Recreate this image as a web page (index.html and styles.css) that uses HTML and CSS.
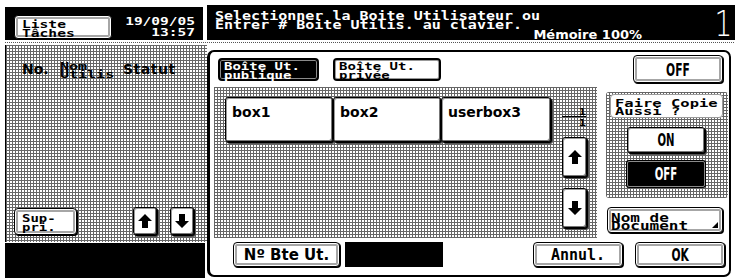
FILE: index.html
```html
<!DOCTYPE html>
<html lang="fr">
<head>
<meta charset="utf-8">
<title>Boîte Utilisateur</title>
<link rel="stylesheet" href="styles.css">
</head>
<body>
<div class="screen">
  <aside class="left">
    <div class="lhead">
      <button class="b-frame liste"><span class="mono sq t-liste">Liste<br>Tâches</span></button>
      <div class="mono sq clock">19/09/05<br>13:57</div>
    </div>
    <div class="dotline"></div>
    <div class="lpanel pattern">
      <div class="cols">
        <span class="c-no">No.</span>
        <span class="c-nom"><span class="mono sq t-nom">Nom<br>Utilis</span></span>
        <span class="c-stat">Statut</span>
      </div>
      <div class="lactions">
        <button class="b-frame suppr"><span class="mono sq t-sup">Sup-<br>pri.</span></button>
        <div class="arrows">
          <button class="b-raise arrow-sm" aria-label="haut"><svg width="14" height="14" viewBox="0 0 14 14"><path d="M7 0L14 7H10V14H4V7H0Z"/></svg></button>
          <button class="b-raise arrow-sm" aria-label="bas"><svg width="14" height="14" viewBox="0 0 14 14"><path d="M7 14L14 7H10V0H4V7H0Z"/></svg></button>
        </div>
      </div>
    </div>
    <div class="lfoot"></div>
  </aside>

  <main class="right">
    <header class="rhead">
      <div class="msg">
        <p class="mono sq t-msg">Selectionner la Boite Utilisateur ou<br>Entrer # Boite Utilis. au clavier.</p>
        <p class="mem">Mémoire 100%</p>
      </div>
      <div class="num">1</div>
    </header>
    <div class="dotline"></div>

    <section class="panel">
      <div class="tabs">
        <button class="tab sel"><span class="mono sq t-tab">Boîte Ut.<br>publique</span></button>
        <button class="tab"><span class="mono sq t-tab">Boîte Ut.<br>privée</span></button>
      </div>
      <div class="topside">
        <button class="b-frame cond off-top"><span class="nx">OFF</span></button>
      </div>

      <div class="list pattern">
        <div class="boxes">
          <button class="b-raise box">box1</button>
          <button class="b-raise box">box2</button>
          <button class="b-raise box box3">userbox3</button>
        </div>
        <div class="pager">
          <div class="pg">
            <span class="mono sq t-pg">1</span>
            <span class="pg-line"></span>
            <span class="mono sq t-pg">1</span>
          </div>
          <button class="b-raise arrow-tall up" aria-label="haut"><svg width="14" height="14" viewBox="0 0 14 14"><path d="M7 0L14 7H10V14H4V7H0Z"/></svg></button>
          <button class="b-raise arrow-tall down" aria-label="bas"><svg width="14" height="14" viewBox="0 0 14 14"><path d="M7 14L14 7H10V0H4V7H0Z"/></svg></button>
        </div>
      </div>

      <div class="side">
        <div class="copy pattern">
          <div class="copy-label"><span class="mono sq t-copy">Faire Copie<br>Aussi ?</span></div>
          <button class="b-raise cond onoff"><span class="nx">ON</span></button>
          <button class="cond onoff dark"><span class="nx">OFF</span></button>
        </div>
        <button class="b-frame docname"><span class="mono sq t-doc">Nom de<br>Document</span></button>
      </div>

      <div class="brow">
        <button class="b-frame bnum">Nº Bte Ut.</button>
        <div class="field"></div>
        <button class="b-frame mono annul">Annul.</button>
        <button class="b-frame cond ok"><span class="nx">OK</span></button>
      </div>
    </section>
  </main>
</div>
</body>
</html>
```

FILE: styles.css
```css
* { box-sizing: border-box; margin: 0; padding: 0; }
html, body { width: 735px; height: 278px; overflow: hidden; background: #fff; }
body { font-family: "DejaVu Sans", sans-serif; color: #000; }
button {
  font: inherit; color: inherit; background: none; border: 0;
  display: flex; align-items: center; justify-content: center;
  text-align: left;
}

.screen { display: flex; height: 278px; }

.pattern {
  background:
    linear-gradient(90deg, #666 1px, transparent 1px) 0 0 / 3px 3px,
    linear-gradient(#666 1px, #fff 1px) 0 0 / 3px 3px;
}
.mono { font-family: "DejaVu Sans Mono", monospace; font-weight: bold; }
.sq { display: inline-block; transform: translateY(1.5px) scaleY(.72); }
.cond { font-family: "DejaVu Sans Condensed", "DejaVu Sans", sans-serif; font-weight: bold; font-size: 18px; }
.nx { display: inline-block; transform: scaleX(.66); }

/* button looks */
.b-frame {
  background: #fff;
  border: 1px solid #000;
  border-radius: 4px;
  box-shadow: inset 0 0 0 1px #fff, inset 0 0 0 3px #a6a6a6, 1px 1px 0 #000;
}
.b-raise {
  background: #fff;
  border: 1px solid #000;
  border-radius: 3px;
  box-shadow: inset 1px 1px 0 #9a9a9a, inset -1px -1px 0 #777, 1px 1px 0 #000, 2px 2px 0 #555;
}

.dotline { height: 1px; margin-top: 2px; background: repeating-linear-gradient(90deg, #555 0 1px, transparent 1px 2px); }

/* ---------- left column ---------- */
.left { width: 202px; margin-left: 5px; display: flex; flex-direction: column; }
.lhead {
  height: 33px; margin-top: 7px; margin-right: 4px;
  background: #000;
  display: flex; align-items: center; justify-content: space-between;
  padding: 0 8px 0 9px;
}
.liste { width: 98px; height: 24px; align-self: flex-end; margin-bottom: 1px; justify-content: flex-start; padding-left: 7px; }
.t-liste { font-size: 14.6px; line-height: 12.4px; }
.clock { color: #fff; text-align: right; font-size: 14.5px; line-height: 12.8px; transform: scaleY(.78); margin-top: 7px; }

.lpanel {
  margin-top: 2px; flex: 1;
  border-left: 1px solid #000;
  display: flex; flex-direction: column; justify-content: space-between;
  padding: 13px 13px 7px 8px;
}
.cols { display: grid; grid-template-columns: 38px 63px auto; align-items: center; margin-left: 8px; }
.c-no { font-weight: bold; font-size: 14px; }
.c-nom { display: flex; align-items: center; }
.t-nom { font-size: 15px; line-height: 11px; }
.c-stat { font-weight: bold; font-size: 14px; letter-spacing: .5px; }

.lactions { display: flex; align-items: flex-end; justify-content: space-between; }
.suppr { width: 63px; height: 27px; justify-content: flex-start; padding-left: 7px; }
.t-sup { font-size: 14px; line-height: 11.5px; }
.arrows { display: flex; gap: 13px; }
.arrow-sm { width: 24px; height: 28px; }

.lfoot { height: 35px; margin-top: 1px; margin-right: 2px; background: #000; }

/* ---------- right column ---------- */
.right { flex: 1; display: flex; flex-direction: column; }
.rhead {
  margin-top: 5px; height: 35px;
  background: #000; color: #fff;
  display: flex; padding: 7px 3px 0 8px;
}
.msg { width: 427px; display: flex; flex-direction: column; }
.t-msg { font-size: 15px; line-height: 12.2px; transform: scaleY(.76); transform-origin: 0 0; margin-bottom: -8px; }
.mem { align-self: flex-end; font-weight: bold; font-size: 13px; line-height: 13px; }
.num {
  margin-left: auto; margin-top: -2px;
  font-family: "DejaVu Sans", sans-serif;
  font-weight: 200;
  font-size: 35px; line-height: 28px;
  transform: scaleX(.8); transform-origin: 100% 50%;
}

.panel {
  flex: 1;
  margin: 7px 4px 1px 0;
  border: 2px solid #000; border-left-width: 3px;
  border-radius: 7px;
  background: #fff;
  display: grid;
  grid-template-columns: 383px 122px;
  grid-template-rows: 29px 151px 26px;
  column-gap: 9px; row-gap: 3px;
  padding: 3px 1px 7px 4px;
}

.tabs { display: flex; align-items: center; gap: 14px; padding-left: 4px; }
.tab {
  height: 23px; justify-content: flex-start; padding-left: 4px;
  background: #fff;
  border: 2px solid #000; border-radius: 4px;
  box-shadow: inset 0 0 0 1px #999;
}
.tab:first-child { width: 101px; }
.tab:last-child { width: 108px; }
.tab.sel { background: #000; color: #fff; box-shadow: inset 0 0 0 1px #8a8a8a; }
.t-tab { font-size: 14px; line-height: 12.5px; }

.topside { display: flex; }
.off-top { width: 90px; height: 28px; margin-left: 27px; }

.list { display: flex; padding: 10px 0 0 11px; }
.boxes { display: flex; align-items: flex-start; }
.box {
  width: 108px; height: 45px;
  align-items: flex-start; justify-content: flex-start;
  padding: 6px 6px;
  font-weight: bold; font-size: 14px; line-height: 16px;
}
.box3 { width: 110px; }

.pager { margin-left: 9px; width: 28px; display: flex; flex-direction: column; }
.pg { margin-top: 8px; margin-left: 2px; height: 22px; display: flex; flex-direction: column; align-items: flex-end; justify-content: center; padding-right: 2px; }
.t-pg { font-size: 12px; line-height: 10px; }
.pg-line { align-self: stretch; height: 1px; background: #000; }
.arrow-tall { width: 25px; height: 40px; margin-left: 2px; }
.arrow-tall.up { margin-top: 10px; }
.arrow-tall.down { margin-top: 11px; }

.side { display: flex; flex-direction: column; justify-content: space-between; padding: 5px 0; }
.copy {
  height: 106px; border-radius: 3px;
  padding: 2px 5px 0 4px;
  display: flex; flex-direction: column;
}
.copy-label {
  height: 24px; background: #fff;
  border: 1px solid #9a9a9a; border-radius: 4px;
  display: flex; align-items: center; padding-left: 4px;
}
.t-copy { font-size: 15.5px; line-height: 12px; }
.onoff { width: 78px; height: 26px; margin-left: 17px; margin-top: 9px; font-size: 17px; }
.onoff.dark { margin-top: 8px; background: #000; color: #fff; border: 1px solid #8a8a8a; box-shadow: 0 0 0 1px #000; border-radius: 2px; }

.docname {
  position: relative;
  width: 116px; height: 26px; margin-left: 1px;
  justify-content: flex-start; padding-left: 3px;
}
.docname::after {
  content: ""; position: absolute; right: 4px; bottom: 4px;
  border-left: 6px solid transparent; border-bottom: 6px solid #000;
}
.t-doc { font-size: 16px; line-height: 11.5px; }

.brow { grid-column: 1 / -1; display: flex; padding-left: 19px; margin-top: 1px; }
.bnum { width: 107px; font-weight: bold; font-size: 15px; }
.field { width: 98px; margin-left: 5px; background: #000; }
.annul { width: 90px; margin-left: auto; font-size: 15px; }
.ok { width: 90px; margin-left: 12px; margin-right: 3px; }
```
